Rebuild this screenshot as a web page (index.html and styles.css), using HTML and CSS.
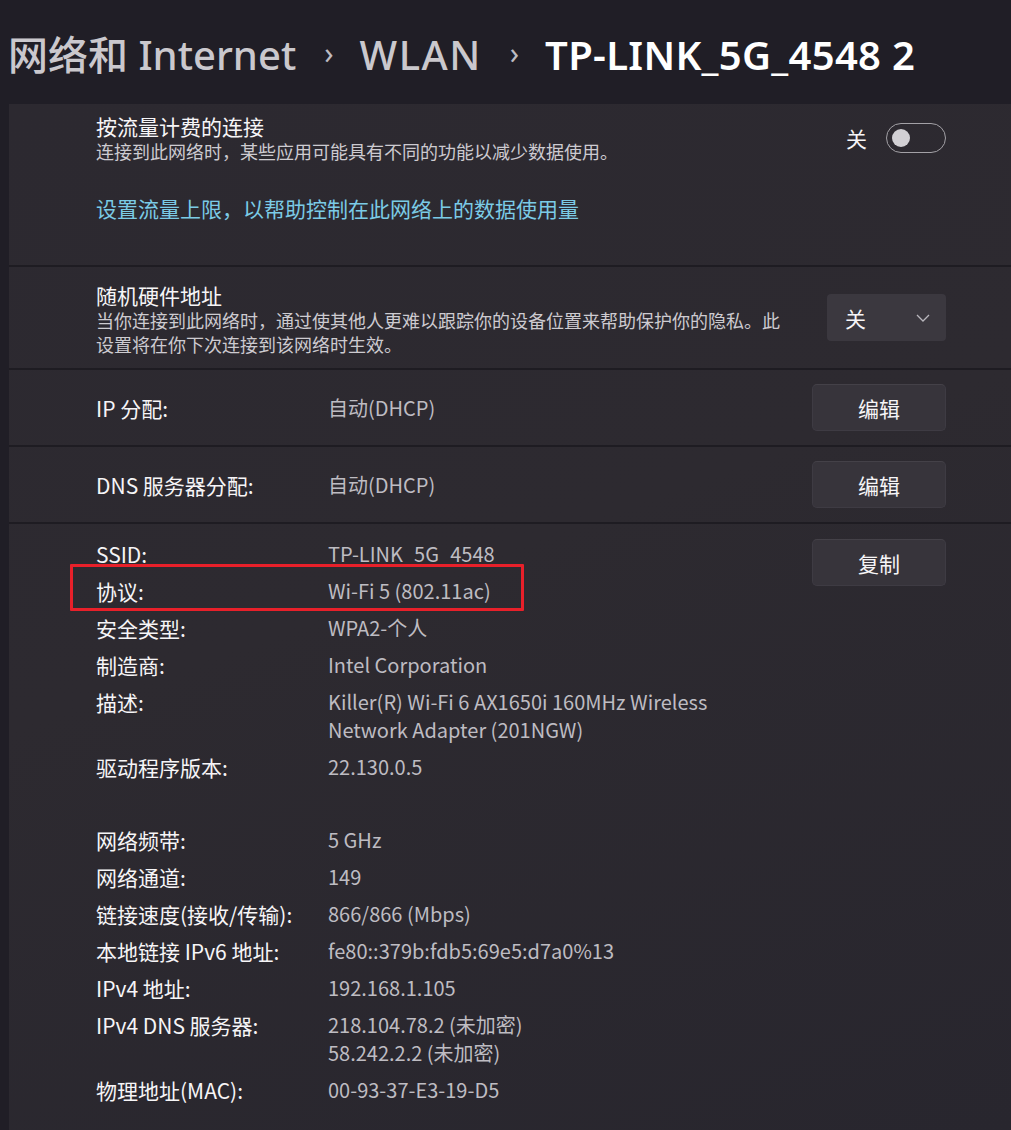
FILE: index.html
```html
<!DOCTYPE html>
<html lang="zh-CN">
<head>
<meta charset="utf-8">
<title>WLAN</title>
<link rel="stylesheet" href="styles.css">
</head>
<body>
<header class="crumbs">
  <span class="crumb">网络和 Internet</span>
  <span class="sep">›</span>
  <span class="crumb mid">WLAN</span>
  <span class="sep">›</span>
  <span class="crumb current">TP-LINK_5G_4548 2</span>
</header>
<main class="panel">
  <section class="setting metered">
    <div class="text">
      <div class="title">按流量计费的连接</div>
      <div class="desc">连接到此网络时，某些应用可能具有不同的功能以减少数据使用。</div>
      <div class="link">设置流量上限，以帮助控制在此网络上的数据使用量</div>
    </div>
    <div class="toggle-wrap">
      <span class="state">关</span>
      <span class="toggle"><span class="knob"></span></span>
    </div>
  </section>
  <section class="setting random">
    <div class="text">
      <div class="title">随机硬件地址</div>
      <div class="desc">当你连接到此网络时，通过使其他人更难以跟踪你的设备位置来帮助保护你的隐私。此<br>设置将在你下次连接到该网络时生效。</div>
    </div>
    <div class="dropdown">
      <span>关</span>
      <svg class="chev" width="14" height="8" viewBox="0 0 14 8"><path d="M1 1l6 6 6-6" fill="none" stroke="#b9b7bd" stroke-width="1.3"/></svg>
    </div>
  </section>
  <section class="setting row">
    <div class="kv"><span class="k">IP 分配:</span><span class="v">自动(DHCP)</span></div>
    <button class="btn">编辑</button>
  </section>
  <section class="setting row">
    <div class="kv"><span class="k">DNS 服务器分配:</span><span class="v">自动(DHCP)</span></div>
    <button class="btn">编辑</button>
  </section>
  <section class="setting details">
    <dl class="props">
      <dt>SSID:</dt><dd class="ssid">TP-LINK_5G_4548</dd>
      <dt>协议:</dt><dd>Wi-Fi 5 (802.11ac)</dd>
      <dt>安全类型:</dt><dd>WPA2-个人</dd>
      <dt>制造商:</dt><dd>Intel Corporation</dd>
      <dt>描述:</dt><dd>Killer(R) Wi-Fi 6 AX1650i 160MHz Wireless<br>Network Adapter (201NGW)</dd>
      <dt>驱动程序版本:</dt><dd>22.130.0.5</dd>
      <dt class="gap"></dt><dd class="gap"></dd>
      <dt>网络频带:</dt><dd>5 GHz</dd>
      <dt>网络通道:</dt><dd>149</dd>
      <dt>链接速度(接收/传输):</dt><dd>866/866 (Mbps)</dd>
      <dt>本地链接 IPv6 地址:</dt><dd>fe80::379b:fdb5:69e5:d7a0%13</dd>
      <dt>IPv4 地址:</dt><dd>192.168.1.105</dd>
      <dt>IPv4 DNS 服务器:</dt><dd>218.104.78.2 (未加密)<br>58.242.2.2 (未加密)</dd>
      <dt>物理地址(MAC):</dt><dd>00-93-37-E3-19-D5</dd>
    </dl>
    <button class="btn copy">复制</button>
    <div class="highlight"></div>
  </section>
</main>
</body>
</html>
```
FILE: styles.css
```css
* { box-sizing: border-box; }
html, body { margin: 0; height: 100%; }
body {
  background: #201e26;
  font-family: "Noto Sans CJK SC", "Noto Sans", sans-serif;
  color: #f3f2f4;
  overflow: hidden;
}
.crumbs {
  height: 104px;
  display: flex;
  align-items: center;
  padding: 6px 0 0 8px;
  font-family: "Noto Sans", "Noto Sans CJK SC", sans-serif;
  font-size: 40px;
  line-height: 48px;
  color: #cac8cd;
  font-weight: 500;
}
.crumb.mid { letter-spacing: 1.5px; }
.crumb.current { color: #ffffff; font-weight: 600; letter-spacing: 0.3px; }
.sep {
  font-size: 30px;
  color: #bdbbc1;
  margin: 0 26px 0 28px;
  font-weight: 400;
  position: relative;
  top: -2px;
}
.panel {
  margin-left: 9px;
  background: linear-gradient(160deg, #2c2930 0%, #2d2a30 45%, #28262e 100%);
  min-height: 1026px;
}
.setting {
  display: flex;
  justify-content: space-between;
  padding: 0 65px 0 87px;
  border-bottom: 2px solid #1e1c22;
}
.title { font-size: 21px; line-height: 26px; color: #f6f5f7; }
.desc { font-size: 18px; line-height: 24px; color: #cdcbd0; }
.link { font-size: 21px; line-height: 28px; color: #7bcbe6; margin-top: 31px; }
.metered { height: 163px; padding-top: 9px; }
.toggle-wrap {
  display: flex;
  align-items: center;
  gap: 19px;
  margin-top: 10px;
  height: 30px;
}
.state { font-size: 21px; color: #f6f5f7; }
.toggle {
  width: 60px;
  height: 30px;
  border: 1.5px solid #a3a1a6;
  border-radius: 15px;
  display: flex;
  align-items: center;
  padding-left: 5px;
}
.knob { width: 18px; height: 18px; border-radius: 50%; background: #d2d0d4; }
.random { height: 103px; padding-top: 15px; }
.dropdown {
  width: 119px;
  height: 47px;
  margin-top: 12px;
  background: #3b383f;
  border-radius: 4px;
  display: flex;
  align-items: center;
  justify-content: space-between;
  padding: 0 16px 0 18px;
  font-size: 21px;
  color: #f6f5f7;
}
.row { height: 77px; align-items: center; }
.kv { display: flex; font-size: 20px; line-height: 28px; }
.k { width: 232px; color: #f6f5f7; font-size: 21px; }
.v { color: #bebcc2; }
.btn {
  width: 134px;
  height: 47px;
  background: #37343b;
  border: 1px solid #3e3b43;
  border-top-color: #444148;
  border-radius: 5px;
  color: #f6f5f7;
  font-family: inherit;
  font-size: 21px;
}
.details {
  position: relative;
  border-bottom: none;
  padding-top: 11px;
  align-items: flex-start;
}
.copy { margin-top: 4px; }
.props {
  margin: 0;
  display: grid;
  grid-template-columns: 232px auto;
  align-items: start;
  font-size: 20px;
  line-height: 28px;
}
.props dt, .props dd { margin: 0; padding: 4.5px 0; }
.props dt { color: #f6f5f7; font-size: 21px; }
.props dd { color: #bebcc2; }
.props .gap { height: 36px; padding: 0; }
.props .ssid { height: 28px; padding-bottom: 0; overflow: hidden; }
.highlight {
  position: absolute;
  left: 61px;
  top: 40px;
  width: 454px;
  height: 47px;
  border: 3px solid #e8202a;
  border-radius: 1px;
}
```
